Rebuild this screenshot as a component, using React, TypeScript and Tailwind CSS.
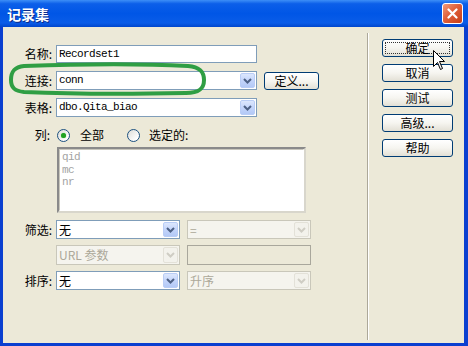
import React from "react";

const Chevron = ({ color }: { color: string }) => (
  <svg width="9" height="6" viewBox="0 0 9 6">
    <path d="M1 1 L4.5 4.5 L8 1" fill="none" stroke={color} strokeWidth="2" />
  </svg>
);

function Select({
  w,
  text,
  mono,
  disabled,
}: {
  w: string;
  text?: string;
  mono?: boolean;
  disabled?: boolean;
}) {
  return (
    <div
      className={
        (disabled
          ? "border-[#c9c7ba] bg-[#f5f4ee] text-[#aca899] "
          : "border-[#7f9db9] bg-white text-black ") +
        w +
        " h-full flex items-center border"
      }
    >
      <div
        className={
          (mono
            ? "[font-family:'Liberation_Mono',monospace] text-[11px] tracking-[-0.6px] "
            : "[font-family:'Noto_Sans_CJK_SC',sans-serif] text-[12px] ") +
          "flex-1 pl-[2px] leading-none whitespace-pre"
        }
      >
        {text}
      </div>
      <div
        className={
          (disabled
            ? "bg-[#f3f2ec] border-[#e3e1d8] "
            : "bg-[linear-gradient(180deg,#dce7fd_0%,#c4d5fb_50%,#b3c9f6_100%)] border-[#b9cdf6] ")+
          "w-[15px] h-[calc(100%-2px)] mr-[1px] rounded-[2px] border flex items-center justify-center"
        }
      >
        <Chevron color={disabled ? "#cfcdc4" : "#4d6185"} />
      </div>
    </div>
  );
}

function XPButton({
  label,
  w,
  focus,
}: {
  label: string;
  w: string;
  focus?: boolean;
}) {
  return (
    <div
      className={
        w +
        " h-[18px] relative rounded-[3px] border border-[#003c74] bg-[linear-gradient(180deg,#ffffff_0%,#f6f5f0_50%,#e3e0d5_100%)] flex items-center justify-center [font-family:'Noto_Sans_CJK_SC',sans-serif] text-[12px] leading-none text-black"
      }
    >
      {focus && (
        <div className="absolute inset-[2px] border border-dotted border-[#333]" />
      )}
      <span className="relative">{label}</span>
    </div>
  );
}

function Label({ text }: { text: string }) {
  return (
    <div className="w-[49px] text-right pr-[0px] [font-family:'Noto_Sans_CJK_SC',sans-serif] text-[12px] leading-none text-black whitespace-pre">
      {text}
    </div>
  );
}

function Radio({ checked }: { checked?: boolean }) {
  return (
    <div className="w-[13px] h-[13px] rounded-full border border-[#1c5180] bg-[linear-gradient(135deg,#dcdcd7_0%,#ffffff_80%)] flex items-center justify-center">
      {checked && (
        <div className="w-[5px] h-[5px] rounded-full bg-[#21a121] shadow-[0_0_1px_#4fcf4f]" />
      )}
    </div>
  );
}

export default function App() {
  return (
    <div className="relative w-[468px] h-[346px] bg-[#0a3fd0] overflow-hidden">
      {/* title bar */}
      <div className="h-[27px] flex items-center justify-between pl-[7px] pr-[5px] bg-[linear-gradient(180deg,#3d8ff7_0%,#0c5fe9_14%,#0056e6_50%,#0a5ce8_85%,#0046cc_100%)]">
        <span className="[font-family:'Noto_Sans_CJK_SC',sans-serif] text-[14px] font-bold leading-none text-white [text-shadow:1px_1px_0_#0a2a8a]">
          记录集
        </span>
        <div className="w-[21px] h-[21px] rounded-[3px] border border-white bg-[linear-gradient(135deg,#f09a7a_0%,#e0603a_45%,#c63d16_100%)] flex items-center justify-center">
          <svg width="11" height="11" viewBox="0 0 11 11">
            <path
              d="M1.5 1.5 L9.5 9.5 M9.5 1.5 L1.5 9.5"
              stroke="white"
              strokeWidth="2.2"
              strokeLinecap="round"
            />
          </svg>
        </div>
      </div>

      {/* body */}
      <div className="ml-[3px] mr-[4px] h-[316px] bg-[#ece9d8] flex">
        {/* left panel */}
        <div className="w-[364px] pt-[18px] flex flex-col">
          <div className="h-[18px] flex items-center gap-[4px]">
            <Label text="名称:" />
            <div className="w-[201px] h-full border border-[#7f9db9] bg-white flex items-center pl-[2px] [font-family:'Liberation_Mono',monospace] text-[11px] tracking-[-0.6px] leading-none text-black">
              Recordset1
            </div>
          </div>
          <div className="mt-[8px] h-[19px] flex items-center gap-[4px]">
            <Label text="连接:" />
            <Select w="w-[201px]" text="conn" mono />
            <div className="ml-[3px]">
              <XPButton label="定义..." w="w-[55px]" />
            </div>
          </div>
          <div className="mt-[8px] h-[19px] flex items-center gap-[4px]">
            <Label text="表格:" />
            <Select w="w-[201px]" text="dbo.Qita_biao" mono />
          </div>
          <div className="mt-[10px] h-[16px] flex items-center">
            <div className="w-[47px] text-right [font-family:'Noto_Sans_CJK_SC',sans-serif] text-[12px] leading-none text-black">
              列:
            </div>
            <div className="ml-[7px]">
              <Radio checked />
            </div>
            <span className="ml-[10px] [font-family:'Noto_Sans_CJK_SC',sans-serif] text-[12px] leading-none text-black">
              全部
            </span>
            <div className="ml-[23px]">
              <Radio />
            </div>
            <span className="ml-[9px] [font-family:'Noto_Sans_CJK_SC',sans-serif] text-[12px] leading-none text-black">
              选定的:
            </span>
          </div>
          <div className="mt-[4px] ml-[54px] w-[249px] h-[66px] border-2 border-t-[#8a8a8a] border-l-[#8a8a8a] border-r-[#d8d6cc] border-b-[#d8d6cc] bg-white">
            <div className="h-full border border-t-[#c8c6bc] border-l-[#c8c6bc] border-r-white border-b-white pl-[2px] pt-[1px] [font-family:'Liberation_Mono',monospace] text-[11px] tracking-[-0.6px] leading-[12.5px] text-[#a3a3a3]">
              <div>qid</div>
              <div>mc</div>
              <div>nr</div>
            </div>
          </div>
          <div className="mt-[7px] h-[19px] flex items-center gap-[4px]">
            <Label text="筛选:" />
            <Select w="w-[124px]" text="无" />
            <div className="ml-[3px] h-full">
              <Select w="w-[124px]" text="=" disabled />
            </div>
          </div>
          <div className="mt-[6px] h-[20px] flex items-center gap-[4px]">
            <div className="w-[49px]" />
            <Select w="w-[124px]" text="URL 参数" disabled />
            <div className="ml-[3px] w-[124px] h-full border border-[#a9a79c] bg-[#ece9d8]" />
          </div>
          <div className="mt-[6px] h-[19px] flex items-center gap-[4px]">
            <Label text="排序:" />
            <Select w="w-[124px]" text="无" />
            <div className="ml-[3px] h-full">
              <Select w="w-[124px]" text="升序" disabled />
            </div>
          </div>
        </div>

        {/* divider */}
        <div className="mt-[6px] mb-[3px] w-[2px] border-l border-l-[#aca899] border-r border-r-white" />

        {/* right buttons */}
        <div className="ml-[13px] pt-[12px] flex flex-col gap-[7px]">
          <XPButton label="确定" w="w-[71px]" focus />
          <XPButton label="取消" w="w-[71px]" />
          <XPButton label="测试" w="w-[71px]" />
          <XPButton label="高级..." w="w-[71px]" />
          <XPButton label="帮助" w="w-[71px]" />
        </div>
      </div>

      {/* green hand-drawn highlight */}
      <svg
        className="absolute left-0 top-0 pointer-events-none"
        width="468"
        height="346"
        viewBox="0 0 468 346"
      >
        <path
          d="M24 66 C80 64 150 64 188 66 C200 67 204 72 204 80 C204 89 199 93 186 93 C140 94 70 94 24 92 C15 91 11 88 11 80 C11 71 15 67 24 66 Z"
          fill="none"
          stroke="#2f9e44"
          strokeWidth="4"
        />
      </svg>

      {/* mouse cursor */}
      <svg
        className="absolute left-[433px] top-[50px] pointer-events-none"
        width="13"
        height="21"
        viewBox="0 0 13 21"
      >
        <path
          d="M0.5 0.5 L0.5 16.5 L4.5 12.5 L7.5 19.5 L9.5 18.5 L6.5 11.5 L11.5 11.5 Z"
          fill="white"
          stroke="black"
          strokeWidth="1"
        />
      </svg>
    </div>
  );
}
